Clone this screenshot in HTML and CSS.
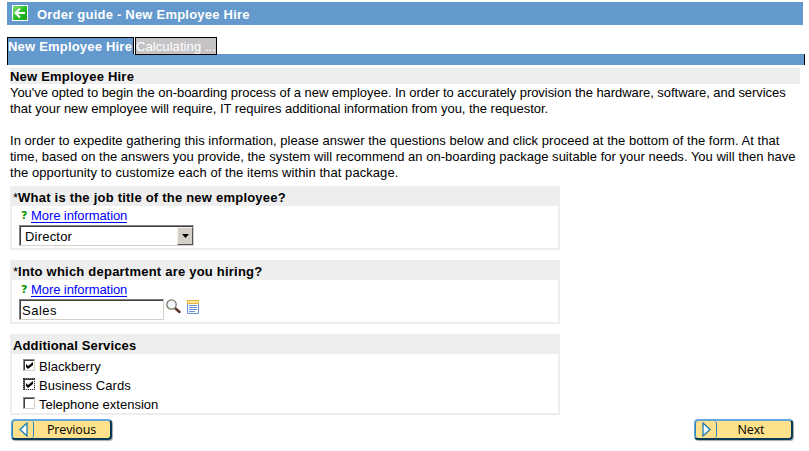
FILE: index.html
```html
<!DOCTYPE html>
<html lang="en">
<head>
<meta charset="utf-8">
<title>Order guide - New Employee Hire</title>
<link rel="stylesheet" href="styles.css">
</head>
<body>
<header class="titlebar">
  <svg class="back" width="16" height="16" viewBox="0 0 16 16"><defs><linearGradient id="g" x2="1" y2="1"><stop stop-color="#8ee27e"/><stop offset=".5" stop-color="#28bd24"/><stop offset="1" stop-color="#16a51b"/></linearGradient></defs><path fill="#fff" d="M0 0h16v16H0z"/><path fill="url(#g)" d="M1 1h14v14H1z"/><path d="M13 8H4M8 3.5L3.5 8L8 12.5" fill="none" stroke="#fff" stroke-width="2"/></svg>
  <h1>Order guide - New Employee Hire</h1>
</header>
<nav class="tabs">
  <span class="tab active">New Employee Hire</span>
  <span class="tab idle">Calculating ...</span>
</nav>
<div class="tabline"></div>
<main>
  <h2 class="strip">New Employee Hire</h2>
  <div class="intro">
    <p><span class="l1">You've opted to begin the on-boarding process of a new employee. In order to accurately provision the hardware, software, and services</span><br><span class="l2">that your new employee will require, IT requires additional information from you, the requestor.</span></p>
    <p><span class="l3">In order to expedite gathering this information, please answer the questions below and click proceed at the bottom of the form. At that</span><br><span class="l4">time, based on the answers you provide, the system will recommend an on-boarding package suitable for your needs. You will then have</span><br><span class="l5">the opportunity to customize each of the items within that package.</span></p>
  </div>
  <section class="panel">
    <h3><i>*</i><span class="q1">What is the job title of the new employee?</span></h3>
    <div class="more"><b>?</b><a>More information</a></div>
    <div class="field select"><span>Director</span><div class="arrow"><svg width="7" height="4"><path d="M0 0h7L3.5 4z"/></svg></div></div>
  </section>
  <section class="panel">
    <h3><i>*</i><span class="q2">Into which department are you hiring?</span></h3>
    <div class="more"><b>?</b><a>More information</a></div>
    <div class="row">
      <div class="field input"><span>Sales</span></div>
      <svg class="lens" width="15" height="15" viewBox="0 0 15 15"><path d="M9.5 9.5l4 3.5" stroke="#5a3024" stroke-width="2.4" stroke-linecap="round"/><circle cx="5.5" cy="5.5" r="4.7" fill="#f4f8fa" stroke="#777768" stroke-width="1.3"/></svg>
      <svg class="form" width="12" height="14" viewBox="0 0 12 14"><path fill="#fff" stroke="#6592d0" d="M.5.5h11v13H.5z"/><path fill="#efb43c" d="M0 0h12v4H0z"/><path fill="#ffe7a0" d="M1 1h10v2H1z"/><path stroke="#6592d0" d="M2 5.5h8M2 7.5h8M2 9.5h8M2 11.5h6"/></svg>
    </div>
  </section>
  <section class="panel services">
    <h3><span class="q3">Additional Services</span></h3>
    <div class="check"><div class="box"><svg width="7" height="7"><path d="M0 2l2 2 5-4v3L2 7 0 5z"/></svg></div><span class="c1">Blackberry</span></div>
    <div class="check"><div class="box focus"><svg width="7" height="7"><path d="M0 2l2 2 5-4v3L2 7 0 5z"/></svg></div><span class="c2">Business Cards</span></div>
    <div class="check"><div class="box"></div><span class="c3">Telephone extension</span></div>
  </section>
  <footer>
    <div class="btn prev"><div class="cap"><svg width="9" height="15"><path d="M8 1v13L1 7.5z" fill="#fff" stroke="#1c7ab5" stroke-width="1.3"/></svg></div><span>Previous</span></div>
    <div class="btn next"><div class="cap"><svg width="9" height="15"><path d="M1 1v13L8 7.5z" fill="#fff" stroke="#1c7ab5" stroke-width="1.3"/></svg></div><span>Next</span></div>
  </footer>
</main>
</body>
</html>
```
FILE: styles.css
```css
* { box-sizing: border-box; }
body { margin: 0; padding: 2px 4px 0 7px; width: 809px; height: 451px; overflow: hidden; background: #fff; color: #000; font: 13px/16px "Liberation Sans", Arial, sans-serif; letter-spacing: 0; white-space: nowrap; }
h1, h2, h3, p { margin: 0; font-size: 13px; }
svg { display: block; flex: none; }
.titlebar { display: flex; align-items: center; width: 796px; height: 23px; padding: 0 0 1px 5px; background: #6399cd; color: #fff; }
.titlebar h1 { margin: 3px 0 0 9px; letter-spacing: .22px; }
.tabs { display: flex; gap: 1px; margin-top: 12px; height: 17px; }
.tab { border: 1px solid #000; line-height: 18px; color: #fff; }
.active { width: 127px; height: 17px; border-bottom: 0; background: #6399cd; font-weight: bold; letter-spacing: .2px; }
.idle { width: 82px; height: 18px; background: #c6c3c6; letter-spacing: .08px; }
.tabline { width: 798px; height: 11px; background: #6399cd; border: solid #000; border-width: 0 1px; }
main { padding: 3px 0 0 3px; }
.strip { width: 790px; height: 16px; background: #eee; line-height: 17px; letter-spacing: .2px; }
.intro { height: 102px; padding-top: 1px; }
.intro p + p { margin-top: 16px; }
.l1 { letter-spacing: -.045px; }
.l2 { letter-spacing: -.03px; }
.l3 { letter-spacing: .03px; }
.l4 { letter-spacing: .01px; }
.l5 { letter-spacing: .07px; }
.panel { width: 550px; height: 64px; margin-bottom: 10px; border: 2px solid #eee; border-top: 0; }
.panel h3 { display: flex; height: 20px; padding-left: 1px; line-height: 23px; background: #eee; letter-spacing: .22px; }
.panel h3 i { font-style: normal; font-weight: normal; letter-spacing: 0; }
.panel .q3 { letter-spacing: .14px; }
.more { display: flex; height: 19px; padding-left: 9px; line-height: 20px; }
.more b { width: 10px; color: #090; font: bold 11px/19px "DejaVu Sans", sans-serif; letter-spacing: 0; }
.more a { height: 17px; color: #00f; border-bottom: 1px solid #00f; letter-spacing: -.08px; }
.field { display: flex; justify-content: space-between; height: 21px; margin-left: 7px; padding-top: 1px; border: 1px solid #808080; border-right-color: #d4d0c8; border-bottom-color: #d4d0c8; box-shadow: inset 1px 1px #404040; line-height: 20px; letter-spacing: .2px; }
.select { width: 175px; padding-left: 5px; }
.arrow { display: flex; align-items: center; justify-content: center; width: 16px; height: 18px; background: #d4d0c8; border: 1px solid #f4f2ee; border-right-color: #555; border-bottom-color: #555; }
.input { width: 145px; padding-left: 2px; letter-spacing: .5px; }
.row { display: flex; }
.lens { margin: 0 0 0 2px; }
.form { margin: 1px 0 0 6px; }
.services { height: 81px; margin-bottom: 4px; }
.check { display: flex; height: 19px; padding: 5px 0 0 11px; }
.check span { margin: 0 0 0 4px; }
.c1, .c2 { letter-spacing: .05px; }
.box { width: 12px; height: 12px; padding: 2px 0 0 2px; border: 1px solid #888; border-right-color: #d4d0c8; border-bottom-color: #d4d0c8; box-shadow: inset 1px 1px #404040; }
.focus { outline: 1px dotted #333; outline-offset: -1px; }
footer { display: flex; justify-content: space-between; width: 783px; padding-left: 1px; }
.btn { display: flex; width: 101px; height: 21px; border: 1px solid #063957; border-top: 2px solid #64a5db; border-left: 1px solid #64a5db; border-right-width: 2px; border-bottom-width: 2px; border-radius: 4px; background: #ffe18b; box-shadow: 1px 1px 1px #aaa; font: 12.5px/18px "Open Sans", sans-serif; letter-spacing: -.15px; }
.next { width: 99px; }
.cap { display: flex; align-items: center; justify-content: center; width: 22px; border: 1px solid #2685bf; border-width: 0 1px; border-radius: 3px; }
.btn span { flex: 1; text-align: center; padding-right: 1px; }
.next span { padding-right: 6px; }
```
